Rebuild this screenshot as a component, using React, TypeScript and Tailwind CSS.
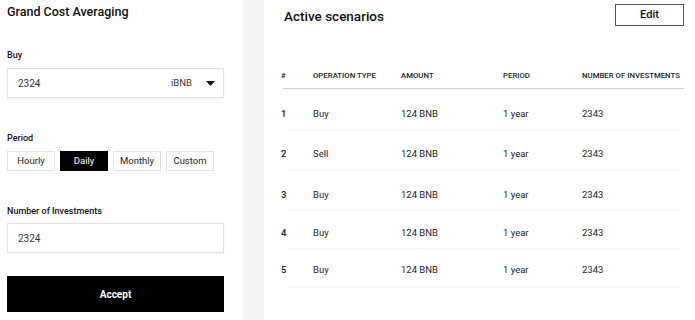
import React from "react";

const rows = [
  { n: 1, t: "Buy", h: "h-[41px] pb-[9px]" },
  { n: 2, t: "Sell", h: "h-[39px] pb-[9px]" },
  { n: 3, t: "Buy", h: "h-[39px] pb-[8px]" },
  { n: 4, t: "Buy", h: "h-[37px] pb-[8px]" },
  { n: 5, t: "Buy", h: "h-[38px] pb-[10px]" },
];

export default function App() {
  return (
    <div
      className="flex w-[695px] h-[320px] bg-white text-[#222] overflow-hidden"
      style={{ fontFamily: "Roboto, 'Noto Sans', sans-serif" }}
    >
      {/* Left panel */}
      <div className="w-[243px] shrink-0 bg-white pl-[7px] pr-[19px] flex flex-col">
        <div className="mt-[3px] h-[18px] flex items-center text-[12.5px] font-medium text-[#111] leading-none">
          Grand Cost Averaging
        </div>
        <div className="mt-[29px] h-[12px] flex items-center text-[9px] font-medium text-[#111]">Buy</div>
        <div className="mt-[6px] h-[30px] border border-[#e4e4e4] shadow-[0_1px_2px_rgba(0,0,0,0.06)] flex items-center pl-[10px] pr-[8px] text-[10px] text-[#333]">
          <span className="flex-1">2324</span>
          <span className="mr-[14px] text-[9.5px]">iBNB</span>
          <svg width="9" height="5" viewBox="0 0 9 5">
            <path d="M0 0 L9 0 L4.5 5 Z" fill="#111" />
          </svg>
        </div>
        <div className="mt-[35px] h-[12px] flex items-center text-[9px] font-medium text-[#111]">Period</div>
        <div className="mt-[6px] flex gap-[5px]">
          {["Hourly", "Daily", "Monthly", "Custom"].map((p) => (
            <div
              key={p}
              className={
                "w-[48px] h-[20px] flex items-center justify-center text-[9.5px] " +
                (p === "Daily"
                  ? "bg-black text-white"
                  : "border border-[#e2e2e2] text-[#222] bg-white")
              }
            >
              {p}
            </div>
          ))}
        </div>
        <div className="mt-[35px] h-[12px] flex items-center text-[9px] font-medium text-[#111]">
          Number of Investments
        </div>
        <div className="mt-[5px] h-[30px] border border-[#e4e4e4] shadow-[0_1px_2px_rgba(0,0,0,0.06)] flex items-center pl-[10px] text-[10px] text-[#333]">
          2324
        </div>
        <div className="mt-[23px] h-[36px] bg-black text-white flex items-center justify-center text-[10px] font-bold">
          Accept
        </div>
      </div>

      {/* gap */}
      <div className="w-[21px] shrink-0 bg-[#f5f5f5]" />

      {/* Right panel */}
      <div className="flex-1 bg-white pl-[17px] pr-[11px] flex flex-col">
        <div className="mt-[4px] flex items-start justify-between">
          <div className="ml-[3px] mt-[2px] h-[20px] flex items-center text-[13.5px] font-medium text-[#111]">
            Active scenarios
          </div>
          <div className="w-[69px] h-[22px] border border-[#555] flex items-center justify-center text-[11px] font-medium text-[#111]">
            Edit
          </div>
        </div>
        <div className="mt-[42px] h-[15px] flex items-center text-[7.8px] font-medium text-[#222] uppercase">
          <span className="w-[32px] shrink-0">#</span>
          <span className="w-[88px] shrink-0">Operation type</span>
          <span className="w-[102px] shrink-0">Amount</span>
          <span className="w-[79px] shrink-0">Period</span>
          <span className="shrink-0">Number of investments</span>
        </div>
        <div className="mt-[5px] ml-[2px] h-px bg-[#cfcfcf] shadow-[0_1px_1px_rgba(0,0,0,0.05)]" />
        {rows.map((r) => (
          <div key={r.n} className="flex flex-col">
            <div className={"flex items-end text-[9.5px] text-[#222] " + r.h}>
              <span className="w-[32px] shrink-0 font-medium">{r.n}</span>
              <span className="w-[88px] shrink-0">{r.t}</span>
              <span className="w-[102px] shrink-0">124 BNB</span>
              <span className="w-[79px] shrink-0">1 year</span>
              <span className="shrink-0">2343</span>
            </div>
            <div className="ml-[7px] mr-[4px] h-px bg-[#f2f2f2]" />
          </div>
        ))}
      </div>
    </div>
  );
}
